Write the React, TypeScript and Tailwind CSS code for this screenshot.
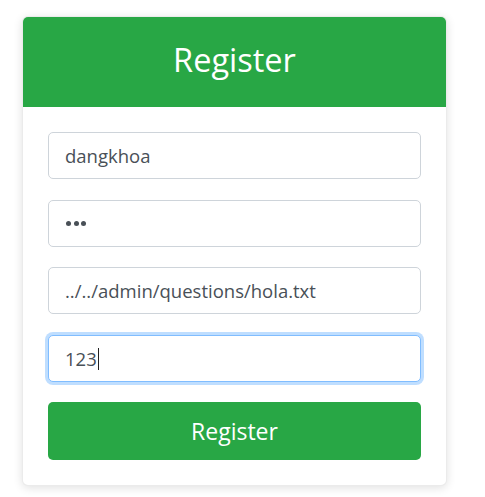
import React from "react";

const font = { fontFamily: '"Open Sans", "Noto Sans", sans-serif' };

function Field({ children, focused }: { children: React.ReactNode; focused?: boolean }) {
  return (
    <div
      className={
        "flex h-[47px] items-center rounded-[5px] border bg-white pl-[16px] text-[18.5px] text-[#495057] " +
        (focused
          ? "border-[#80bdff] shadow-[0_0_0_3px_rgba(0,123,255,0.25)]"
          : "border-[#ced4da]")
      }
    >
      {children}
    </div>
  );
}

export default function App() {
  return (
    <div className="min-h-[497px] w-[485px] bg-white pl-[22px] pt-[16px]" style={font}>
      <div className="w-[425px] overflow-hidden rounded-[6px] border border-[rgba(0,0,0,0.08)] bg-white shadow-[0_2px_10px_rgba(0,0,0,0.12)]">
        <div className="flex h-[90px] items-center justify-center bg-[#28a745] pb-[4px] text-[32.5px] text-white">
          Register
        </div>
        <div className="px-[25px] pb-[25px] pt-[25px]">
          <Field>dangkhoa</Field>
          <div className="mt-[21px]">
            <Field>
              <span className="flex gap-[2.5px] pl-[1px]">
                <span className="h-[5px] w-[5px] rounded-full bg-[#495057]" />
                <span className="h-[5px] w-[5px] rounded-full bg-[#495057]" />
                <span className="h-[5px] w-[5px] rounded-full bg-[#495057]" />
              </span>
            </Field>
          </div>
          <div className="mt-[20px]">
            <Field>../../admin/questions/hola.txt</Field>
          </div>
          <div className="mt-[21px]">
            <Field focused>
              <span>123</span>
              <span className="ml-[1px] h-[22px] w-[1px] bg-[#222]" />
            </Field>
          </div>
          <div className="mt-[20px] flex h-[58px] items-center justify-center rounded-[5px] bg-[#28a745] text-[23px] text-white">
            Register
          </div>
        </div>
      </div>
    </div>
  );
}
